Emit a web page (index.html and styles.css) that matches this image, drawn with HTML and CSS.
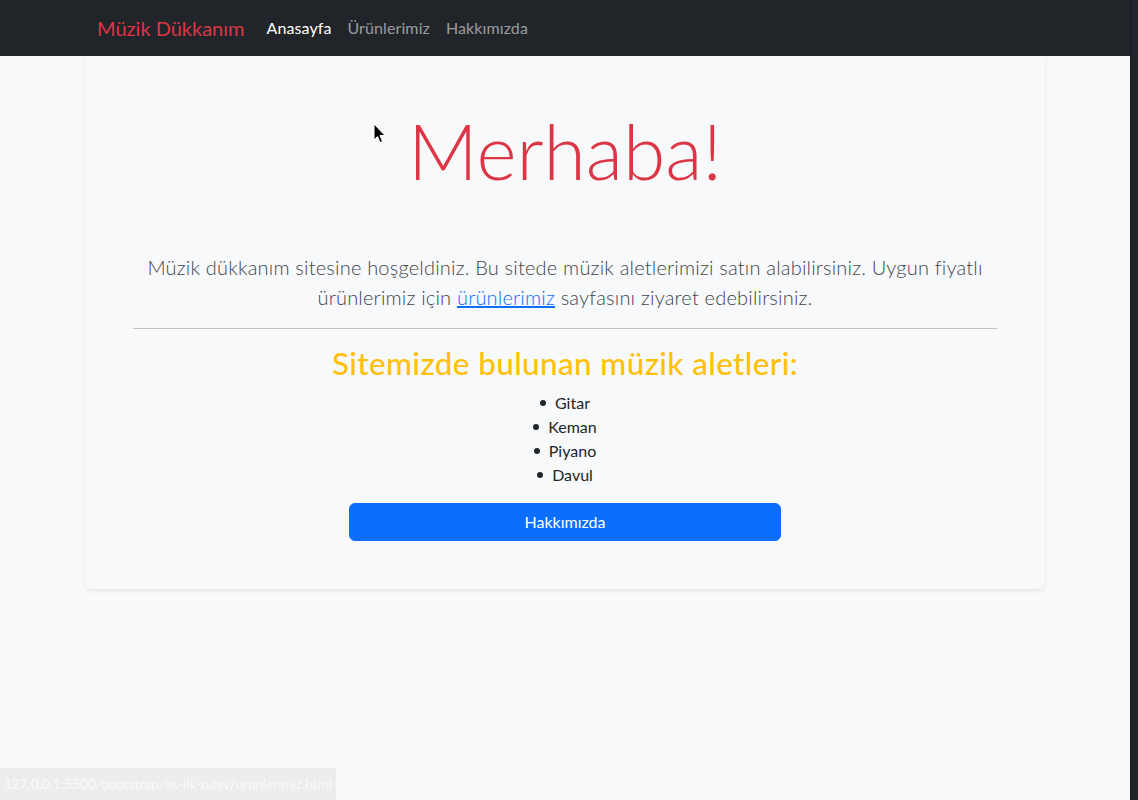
FILE: index.html
```html
<!DOCTYPE html>
<html lang="tr">
<head>
<meta charset="utf-8">
<title>Müzik Dükkanım</title>
<link rel="stylesheet" href="styles.css">
</head>
<body>
<div class="window">
  <div class="page">
    <nav class="navbar">
      <div class="container nav-inner">
        <a class="brand" href="#">Müzik Dükkanım</a>
        <ul class="nav">
          <li><a class="nav-link active" href="#">Anasayfa</a></li>
          <li><a class="nav-link" href="#">Ürünlerimiz</a></li>
          <li><a class="nav-link" href="#">Hakkımızda</a></li>
        </ul>
      </div>
    </nav>
    <main class="container card">
      <div class="card-body">
        <h1 class="display">Merhaba!</h1>
        <p class="lead">Müzik dükkanım sitesine hoşgeldiniz. Bu sitede müzik aletlerimizi satın alabilirsiniz. Uygun fiyatlı ürünlerimiz için <a href="#">ürünlerimiz</a> sayfasını ziyaret edebilirsiniz.</p>
        <hr class="divider">
        <h2 class="subtitle">Sitemizde bulunan müzik aletleri:</h2>
        <ul class="instruments">
          <li>Gitar</li>
          <li>Keman</li>
          <li>Piyano</li>
          <li>Davul</li>
        </ul>
        <a class="btn" href="#">Hakkımızda</a>
      </div>
    </main>
  </div>
  <div class="scrollbar"></div>
</div>
<div class="status">127.0.0.1:5500/bootstrap/bs-ilk-odev/urunlerimiz.html</div>
<svg class="cursor" width="14" height="22" viewBox="0 0 14 22"><path d="M1 1 L1 17 L4.5 13.5 L7 19.5 L9.5 18.5 L7 12.5 L12 12.5 Z" fill="#000" stroke="#fff" stroke-width="1"/></svg>
</body>
</html>
```
FILE: styles.css
```css
* { box-sizing: border-box; }
html, body { margin: 0; padding: 0; height: 100%; }
body {
  font-family: Lato, "Open Sans", sans-serif;
  font-size: 16px;
  line-height: 1.5;
  color: #212529;
  background: #f8f9fa;
  overflow: hidden;
}
.window { display: flex; height: 800px; }
.page { flex: 1; min-width: 0; background: #f8f9fa; }
.scrollbar { width: 8px; background: #20242b; border-left: 1px solid #15181d; }

.container { width: 960px; margin: 0 auto; padding: 0 12px; }

.navbar { background: #212529; height: 56px; }
.nav-inner { display: flex; align-items: center; height: 56px; }
.brand {
  color: #dc3545;
  font-size: 20px;
  text-decoration: none;
  margin-right: 14px;
  line-height: 30px;
}
.nav { display: flex; list-style: none; margin: 0; padding: 0; }
.nav-link {
  display: block;
  padding: 8px;
  color: rgba(255,255,255,.55);
  text-decoration: none;
  letter-spacing: 0.1px;
}
.nav-link.active { color: #fff; }

.card {
  padding: 0;
  background: #f8f9fa;
  border-radius: 0 0 6px 6px;
  box-shadow: 0 2px 4px rgba(0,0,0,.075);
}
.card-body { padding: 48px; text-align: center; }
.display {
  margin: 0 0 8px;
  font-size: 76.8px;
  font-weight: 300;
  line-height: 1.2;
  color: #dc3545;
}
.lead {
  margin: 56px 0 16px;
  font-size: 20px;
  font-weight: 300;
  color: #41464b;
  letter-spacing: 0.2px;
}
.lead a { color: #0d6efd; }
.divider {
  margin: 16px 0;
  border: 0;
  border-top: 1px solid #212529;
  opacity: .25;
}
.subtitle {
  margin: 0 0 8px;
  font-size: 31.4px;
  font-weight: 500;
  line-height: 1.2;
  color: #ffc107;
  letter-spacing: 0.4px;
}
.instruments {
  margin: 0 0 16px;
  padding: 0;
  list-style: none;
}
.instruments li { height: 24px; line-height: 24px; }
.instruments li::before {
  content: "";
  display: inline-block;
  width: 6px;
  height: 6px;
  border-radius: 50%;
  background: #212529;
  margin-right: 9px;
  vertical-align: 3px;
}
.btn {
  display: block;
  width: 50%;
  margin: 0 auto;
  padding: 6px 12px;
  background: #0d6efd;
  color: #fff;
  border-radius: 6px;
  text-decoration: none;
  line-height: 24px;
  border: 1px solid #0d6efd;
}
.status {
  position: fixed;
  left: 0;
  bottom: 0;
  height: 32px;
  padding: 0 4px;
  background: #ededed;
  color: #fafafa;
  font-size: 13.5px;
  line-height: 32px;
  border-top-right-radius: 3px;
}
.cursor { position: fixed; left: 373px; top: 123px; }
```
